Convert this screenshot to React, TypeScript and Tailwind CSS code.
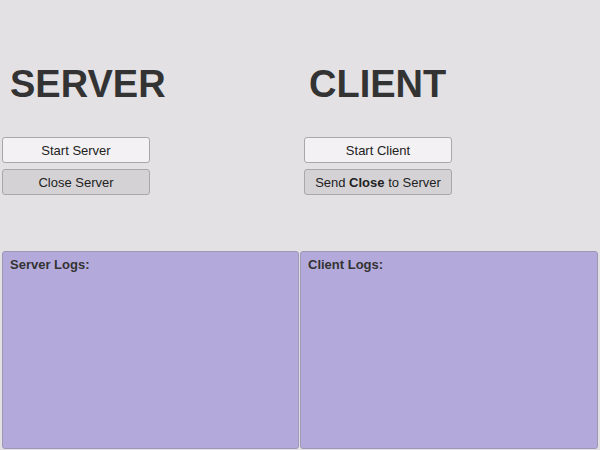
function Button({ children, light }: { children: React.ReactNode; light?: boolean }) {
  return (
    <button
      className={
        light
          ? 'h-[26px] w-[148px] rounded-[3px] border border-[#a9a7aa] bg-[#f3f1f4] pt-[1px] text-[13px] text-[#222]'
          : 'h-[26px] w-[148px] rounded-[3px] border border-[#a9a7aa] bg-[#d4d2d5] pt-[1px] text-[13px] text-[#222]'
      }
    >
      {children}
    </button>
  )
}

function LogPanel({ title, className }: { title: string; className: string }) {
  return (
    <div className={className + ' rounded-[3px] border border-[#9d98b4] bg-[#b3aadb] px-[7px] py-[3px]'}>
      <div className="text-[13px] font-bold text-[#333]">{title}</div>
    </div>
  )
}

function App() {
  return (
    <main
      className="flex h-[450px] w-[600px] flex-col bg-[#e3e1e4] text-[#333]"
      style={{ fontFamily: '"Liberation Sans", Arial, sans-serif' }}
    >
      <div className="flex pt-[65px]">
        <section className="w-[300px] pl-[2px]">
          <h1 className="h-[38px] pl-[8px] text-[38px] font-bold leading-none">SERVER</h1>
          <div className="mt-[34px] flex flex-col gap-[6px]">
            <Button light>Start Server</Button>
            <Button>Close Server</Button>
          </div>
        </section>
        <section className="w-[300px] pl-[4px]">
          <h1 className="h-[38px] pl-[5px] text-[38px] font-bold leading-none">CLIENT</h1>
          <div className="mt-[34px] flex flex-col gap-[6px]">
            <Button light>Start Client</Button>
            <Button>
              Send <b>Close</b> to Server
            </Button>
          </div>
        </section>
      </div>
      <div className="mt-[56px] flex flex-1 gap-[1px] px-[2px] pb-[1px]">
        <LogPanel className="w-[297px]" title="Server Logs:" />
        <LogPanel className="flex-1" title="Client Logs:" />
      </div>
    </main>
  )
}

export default App
